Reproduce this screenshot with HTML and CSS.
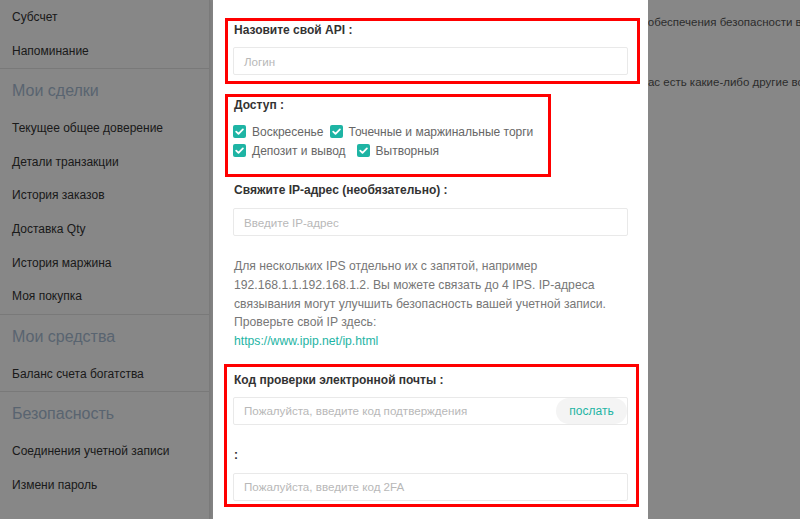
FILE: index.html
```html
<!DOCTYPE html>
<html lang="ru">
<head>
<meta charset="utf-8">
<title>API</title>
<link rel="stylesheet" href="styles.css">
</head>
<body>
<div class="page">
  <aside class="sidebar">
    <ul class="menu">
      <li class="item">Субсчет</li>
      <li class="item">Напоминание</li>
    </ul>
    <div class="section">
      <div class="section-title">Мои сделки</div>
      <ul class="menu">
        <li class="item">Текущее общее доверение</li>
        <li class="item">Детали транзакции</li>
        <li class="item">История заказов</li>
        <li class="item">Доставка Qty</li>
        <li class="item">История маржина</li>
        <li class="item">Моя покупка</li>
      </ul>
    </div>
    <div class="section">
      <div class="section-title">Мои средства</div>
      <ul class="menu">
        <li class="item">Баланс счета богатства</li>
      </ul>
    </div>
    <div class="section">
      <div class="section-title">Безопасность</div>
      <ul class="menu">
        <li class="item">Соединения учетной записи</li>
        <li class="item">Измени пароль</li>
      </ul>
    </div>
  </aside>
  <main class="content">
    <p class="note note-1">для обеспечения безопасности вашей учетной записи</p>
    <p class="note note-2">у вас есть какие-либо другие вопросы</p>
  </main>
</div>

<div class="overlay"></div>

<div class="modal">
  <div class="group group-name">
    <div class="label">Назовите свой API :</div>
    <div class="input"><span class="ph">Логин</span></div>
  </div>

  <div class="group group-access">
    <div class="label">Доступ :</div>
    <div class="checks">
      <div class="check-row">
        <span class="check"><svg viewBox="0 0 13 13" width="13" height="13"><rect width="13" height="13" rx="2" fill="#1eb4a4"/><path d="M3.2 6.6 L5.5 8.9 L9.9 4.4" fill="none" stroke="#fff" stroke-width="1.8" stroke-linecap="round" stroke-linejoin="round"/></svg>Воскресенье</span>
        <span class="check"><svg viewBox="0 0 13 13" width="13" height="13"><rect width="13" height="13" rx="2" fill="#1eb4a4"/><path d="M3.2 6.6 L5.5 8.9 L9.9 4.4" fill="none" stroke="#fff" stroke-width="1.8" stroke-linecap="round" stroke-linejoin="round"/></svg>Точечные и маржинальные торги</span>
      </div>
      <div class="check-row">
        <span class="check"><svg viewBox="0 0 13 13" width="13" height="13"><rect width="13" height="13" rx="2" fill="#1eb4a4"/><path d="M3.2 6.6 L5.5 8.9 L9.9 4.4" fill="none" stroke="#fff" stroke-width="1.8" stroke-linecap="round" stroke-linejoin="round"/></svg>Депозит и вывод</span>
        <span class="check check-wide"><svg viewBox="0 0 13 13" width="13" height="13"><rect width="13" height="13" rx="2" fill="#1eb4a4"/><path d="M3.2 6.6 L5.5 8.9 L9.9 4.4" fill="none" stroke="#fff" stroke-width="1.8" stroke-linecap="round" stroke-linejoin="round"/></svg>Вытворныя</span>
      </div>
    </div>
  </div>

  <div class="group group-ip">
    <div class="label">Свяжите IP-адрес (необязательно) :</div>
    <div class="input"><span class="ph">Введите IP-адрес</span></div>
    <p class="hint">Для нескольких IPS отдельно их с запятой, например<br>192.168.1.1.192.168.1.2. Вы можете связать до 4 IPS. IP-адреса<br>связывания могут улучшить безопасность вашей учетной записи.<br>Проверьте свой IP здесь:<br><a class="link" href="#">https://www.ipip.net/ip.html</a></p>
  </div>

  <div class="group group-mail">
    <div class="label">Код проверки электронной почты :</div>
    <div class="input input-btn"><span class="ph">Пожалуйста, введите код подтверждения</span><span class="send">послать</span></div>
  </div>

  <div class="group group-2fa">
    <div class="label">:</div>
    <div class="input"><span class="ph">Пожалуйста, введите код 2FA</span></div>
  </div>

  <div class="mark mark-1"></div>
  <div class="mark mark-2"></div>
  <div class="mark mark-3"></div>
</div>
</body>
</html>
```

FILE: styles.css
```css
* { box-sizing: border-box; }
html, body { margin: 0; padding: 0; }
body {
  width: 800px;
  height: 519px;
  overflow: hidden;
  font-family: "Liberation Sans", Arial, sans-serif;
  background: #fff;
  color: #333;
}
.page {
  display: flex;
  height: 519px;
}
.sidebar {
  width: 210px;
  flex: none;
  background: #fff;
  border-right: 1px solid #e6e6e6;
  box-shadow: 2px 0 3px rgba(0,0,0,0.08);
  padding-top: 1px;
}
.menu { list-style: none; margin: 0; padding: 0; }
.item {
  height: 33.6px;
  line-height: 33.6px;
  padding-left: 12px;
  font-size: 12px;
  color: #333;
  white-space: nowrap;
}
.section { border-top: 1px solid #e4e4e4; }
.section-title {
  padding: 11px 0 10px 12px;
  line-height: 22px;
  font-size: 16px;
  color: #a9bdd4;
}
.content {
  flex: 1;
  min-width: 0;
  overflow: hidden;
  padding-left: 415px;
}
.note {
  margin: 0;
  font-size: 11.5px;
  line-height: 16px;
  white-space: nowrap;
  color: #555;
}
.note-1 { padding-top: 14px; }
.note-2 { padding-top: 44px; text-indent: 8px; }

.overlay {
  position: fixed;
  inset: 0;
  background: rgba(0,0,0,0.47);
}

.modal {
  position: fixed;
  top: 0;
  left: 213px;
  width: 435px;
  height: 519px;
  background: #fff;
  padding: 0 20px;
}
.label {
  font-size: 12px;
  font-weight: bold;
  line-height: 20px;
  color: #333;
  padding-left: 1px;
}
.input {
  height: 28px;
  border: 1px solid #e9e9e9;
  border-radius: 2px;
  display: flex;
  align-items: center;
  padding-left: 10px;
  font-size: 11.6px;
  margin-top: 7px;
}
.ph { color: #b8b8b8; flex: 1; }
.input-btn { padding-right: 0; }
.send {
  height: 26px;
  line-height: 26px;
  width: 71px;
  text-align: center;
  border-radius: 13px;
  background: #f4f4f4;
  color: #1eb4a4;
  font-size: 12px;
}
.group-name { padding-top: 20px; }
.group-access { padding-top: 20px; }
.checks { margin-top: 7px; }
.check-row {
  display: flex;
  height: 19px;
  align-items: center;
  font-size: 12px;
  color: #666;
}
.check {
  display: inline-flex;
  align-items: center;
  margin-right: 6px;
}
.check svg { margin-right: 6px; flex: none; }
.check-wide { margin-left: 5px; }
.group-ip { padding-top: 20px; }
.group-ip .input { margin-top: 8px; }
.hint {
  margin: 21px 0 0 1px;
  font-size: 12.2px;
  line-height: 18.75px;
  color: #777;
}
.link { color: #1eb4a4; text-decoration: none; }
.group-mail { padding-top: 19px; }
.group-2fa { padding-top: 20px; }
.group-2fa .input { margin-top: 8px; }

.mark {
  position: absolute;
  border: 3px solid #ff0000;
}
.mark-1 { left: 12px; top: 18px; width: 415px; height: 66px; }
.mark-2 { left: 12px; top: 94px; width: 326px; height: 83px; }
.mark-3 { left: 11px; top: 364px; width: 415px; height: 143px; }
```
